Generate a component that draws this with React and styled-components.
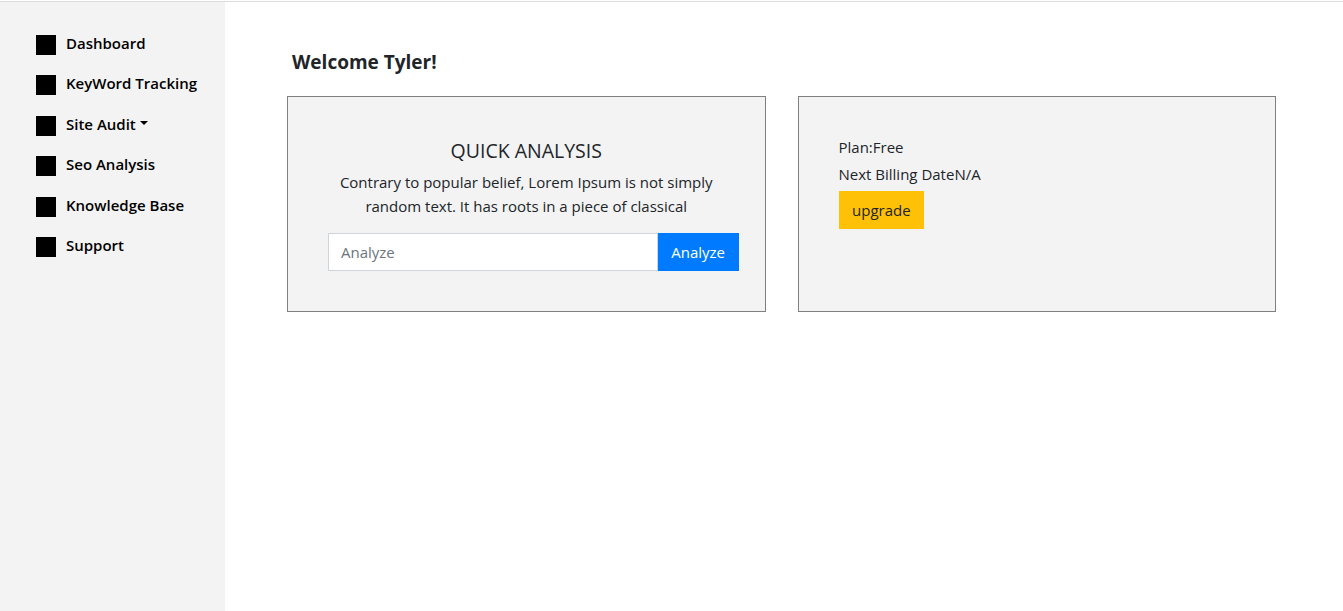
import styled, { createGlobalStyle } from "styled-components";

const GlobalStyle = createGlobalStyle`
  * { box-sizing: border-box; }
  body {
    margin: 0;
    font-family: "Open Sans", "Noto Sans", Arial, sans-serif;
    color: #212529;
    background: #fff;
  }
`;

const Page = styled.div`
  display: flex;
  min-height: 610px;
  margin-top: 1px;
  border-top: 1px solid #dcdcdc;
`;

const Sidebar = styled.aside`
  width: 225px;
  flex-shrink: 0;
  background: #f3f3f3;
  padding: 33px 0 0 36px;
`;

const Menu = styled.ul`
  list-style: none;
  margin: 0;
  padding: 0;
  display: flex;
  flex-direction: column;
  gap: 20.4px;
`;

const MenuItem = styled.li`
  display: flex;
  align-items: center;
  height: 20px;
  font-size: 15px;
  font-weight: 600;
  line-height: 18px;
  color: #000;
  white-space: nowrap;
`;

const MenuIcon = styled.span`
  width: 20px;
  height: 20px;
  background: #000;
  margin-right: 10px;
  flex-shrink: 0;
`;

const MenuLabel = styled.span`
  margin-top: -4px;
`;

const Caret = styled.span`
  display: inline-block;
  margin-left: 4px;
  margin-top: -6px;
  border-top: 4px solid #000;
  border-left: 4px solid transparent;
  border-right: 4px solid transparent;
`;

const Main = styled.main`
  flex: 1;
  padding: 47px 67px 0 62px;
`;

const Welcome = styled.h1`
  margin: 0 0 21px 5px;
  font-size: 19px;
  font-weight: 700;
  line-height: 26px;
`;

const Cards = styled.div`
  display: grid;
  grid-template-columns: 1fr 1fr;
  gap: 32px;
`;

const Card = styled.div`
  height: 216px;
  border: 1px solid #808080;
  background: #f3f3f3;
  padding: 40px 40px 0;
  display: flex;
  flex-direction: column;
  align-items: ${({ $center }) => ($center ? "center" : "flex-start")};
  text-align: ${({ $center }) => ($center ? "center" : "left")};
`;

const CardTitle = styled.h2`
  margin: 0 0 5px;
  font-size: 19.5px;
  font-weight: 400;
  line-height: 28px;
`;

const Text = styled.p`
  margin: 0 0 15px;
  font-size: 15px;
  line-height: 24px;
  max-width: 390px;
`;

const InputGroup = styled.div`
  display: flex;
  align-self: stretch;
  margin-right: -14px;
`;

const Input = styled.input`
  flex: 1;
  min-width: 0;
  height: 38px;
  border: 1px solid #ced4da;
  background: #fff;
  padding: 0 12px;
  font-family: inherit;
  font-size: 15px;
  color: #495057;
  outline: none;
  &::placeholder {
    color: #6c757d;
  }
`;

const Button = styled.button`
  height: 38px;
  border: none;
  padding: 0 13.5px;
  font-family: inherit;
  font-size: 15px;
  background: ${({ $variant }) => ($variant === "primary" ? "#007bff" : "#ffc107")};
  color: ${({ $variant }) => ($variant === "primary" ? "#fff" : "#212529")};
  cursor: pointer;
`;

const Line = styled.p`
  margin: 0 0 6px;
  font-size: 15px;
  line-height: 21px;
`;

const menu = [
  { label: "Dashboard" },
  { label: "KeyWord Tracking" },
  { label: "Site Audit", dropdown: true },
  { label: "Seo Analysis" },
  { label: "Knowledge Base" },
  { label: "Support" },
];

function App() {
  return (
    <>
      <GlobalStyle />
      <Page>
        <Sidebar>
          <Menu>
            {menu.map((item) => (
              <MenuItem key={item.label}>
                <MenuIcon />
                <MenuLabel>{item.label}</MenuLabel>
                {item.dropdown && <Caret />}
              </MenuItem>
            ))}
          </Menu>
        </Sidebar>
        <Main>
          <Welcome>Welcome Tyler!</Welcome>
          <Cards>
            <Card $center>
              <CardTitle>QUICK ANALYSIS</CardTitle>
              <Text>
                Contrary to popular belief, Lorem Ipsum is not simply random
                text. It has roots in a piece of classical
              </Text>
              <InputGroup>
                <Input placeholder="Analyze" />
                <Button $variant="primary">Analyze</Button>
              </InputGroup>
            </Card>
            <Card>
              <Line>Plan:Free</Line>
              <Line>Next Billing DateN/A</Line>
              <Button $variant="warning">upgrade</Button>
            </Card>
          </Cards>
        </Main>
      </Page>
    </>
  );
}

export default App;
